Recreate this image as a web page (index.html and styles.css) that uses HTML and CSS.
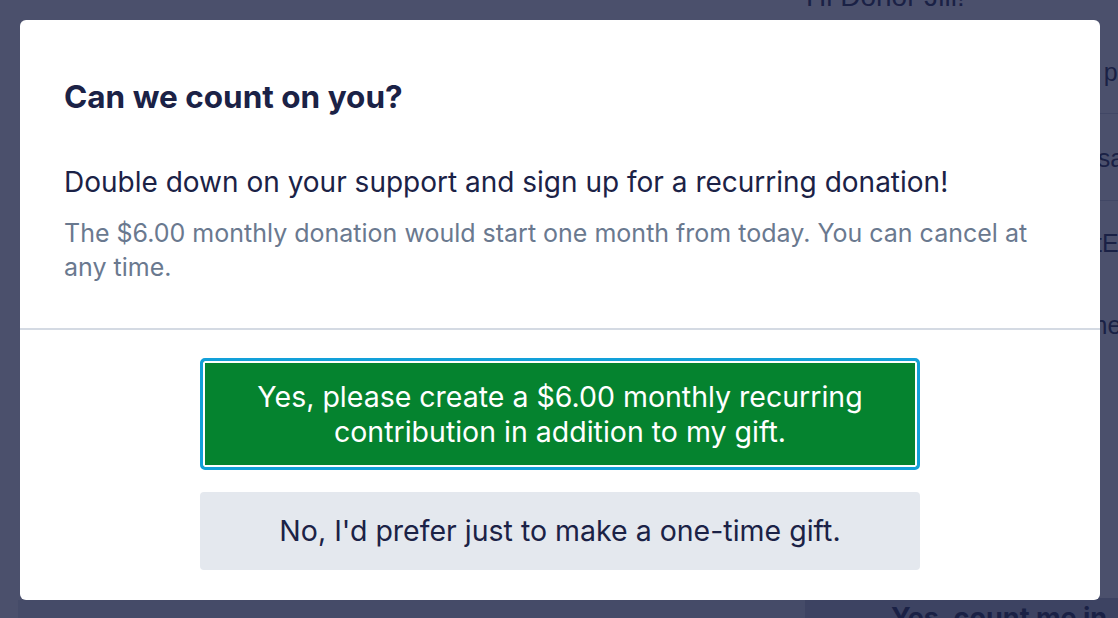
FILE: index.html
```html
<!DOCTYPE html>
<html lang="en">
<head>
<meta charset="utf-8">
<title>Can we count on you?</title>
<link rel="stylesheet" href="styles.css">
</head>
<body>
<div class="page">
  <main class="main">
    <div class="main-body"></div>
    <div class="main-foot"></div>
  </main>
  <aside class="sidebar">
    <p class="greeting">Hi Donor Jill!</p>
    <div class="side-row side-row--first">Your one-time gift will help pa</div>
    <div class="side-row">Amount of your gifts to Mesa</div>
    <div class="side-row side-row--tall">Recurring payment via GiftE<br>Billing address for Jill Donne</div>
    <div class="side-foot"><span class="side-btn">Yes, count me in</span></div>
  </aside>
</div>

<div class="overlay">
  <div class="modal" role="dialog" aria-labelledby="modal-title">
    <div class="modal-head">
      <h2 class="modal-title" id="modal-title">Can we count on you?</h2>
      <p class="modal-lead">Double down on your support and sign up for a recurring donation!</p>
      <p class="modal-note">The $6.00 monthly donation would start one month from today. You can cancel at any time.</p>
    </div>
    <div class="modal-actions">
      <button class="btn btn--primary" type="button">Yes, please create a $6.00 monthly recurring contribution in addition to my gift.</button>
      <button class="btn btn--secondary" type="button">No, I'd prefer just to make a one-time gift.</button>
    </div>
  </div>
</div>
</body>
</html>
```

FILE: styles.css
```css
* { box-sizing: border-box; }

html, body {
  margin: 0;
  padding: 0;
  height: 100%;
  overflow: hidden;
}

body {
  background: #ffffff;
  font-family: "Liberation Sans", Arial, sans-serif;
  color: #1b2246;
}

/* ---------- background page ---------- */
.page {
  display: flex;
  height: 618px;
}

.main {
  flex: 1;
  display: flex;
  flex-direction: column;
}

.main-body { flex: 1; }

.main-foot {
  height: 18px;
  background: #e4e5ea;
  margin-left: 18px;
}

.sidebar {
  width: 313px;
  display: flex;
  flex-direction: column;
}

.greeting {
  margin: -19px 0 0 1px;
  font-size: 28px;
  line-height: 32px;
  white-space: nowrap;
}

.side-row {
  font-size: 25px;
  line-height: 30px;
  white-space: nowrap;
  padding: 29px 0 0 1px;
  height: 87px;
  border-bottom: 1px solid #cfd3dc;
}

.side-row--first {
  height: 101px;
  padding-top: 44px;
}

.side-row--tall {
  border-bottom: none;
  height: auto;
  line-height: 82px;
  padding-top: 1px;
}

.side-foot {
  margin-top: auto;
  height: 20px;
  background: #bdc0d0;
  padding-left: 86px;
  overflow: hidden;
}

.side-btn {
  display: block;
  font-family: Inter, sans-serif;
  font-weight: 700;
  font-size: 27px;
  line-height: 40px;
  white-space: nowrap;
}

/* ---------- overlay + modal ---------- */
.overlay {
  position: fixed;
  inset: 0;
  background: rgba(27, 33, 69, 0.79);
  padding: 20px 18px 18px 20px;
  display: flex;
}

.modal {
  flex: 1;
  background: #ffffff;
  border-radius: 6px;
  display: flex;
  flex-direction: column;
  font-family: Inter, "Noto Sans", sans-serif;
  color: #1b2246;
}

.modal-head {
  padding: 59px 56px 0 44px;
  height: 310px;
  border-bottom: 2px solid #d4dae3;
}

.modal-title {
  margin: 0;
  font-size: 31.5px;
  font-weight: 700;
  line-height: 36px;
}

.modal-lead {
  margin: 49px 0 0 0;
  font-size: 28px;
  line-height: 36px;
}

.modal-note {
  margin: 16px 0 0 0;
  font-size: 25px;
  line-height: 34px;
  color: #6a798f;
}

.modal-actions {
  display: flex;
  flex-direction: column;
  align-items: center;
  gap: 22px;
  padding: 28px 0 30px;
}

.btn {
  width: 720px;
  font-family: Inter, "Noto Sans", sans-serif;
  font-size: 28.5px;
  line-height: 35px;
  text-align: center;
  cursor: pointer;
  margin: 0;
}

.btn--primary {
  background: #05832f;
  color: #ffffff;
  border: 3px solid #12a0d9;
  border-radius: 5px;
  box-shadow: inset 0 0 0 2px #ffffff;
  padding: 18px 30px;
}

.btn--secondary {
  background: #e4e8ee;
  color: #1b2246;
  border: none;
  border-radius: 4px;
  padding: 21px 20px 22px;
}
```
